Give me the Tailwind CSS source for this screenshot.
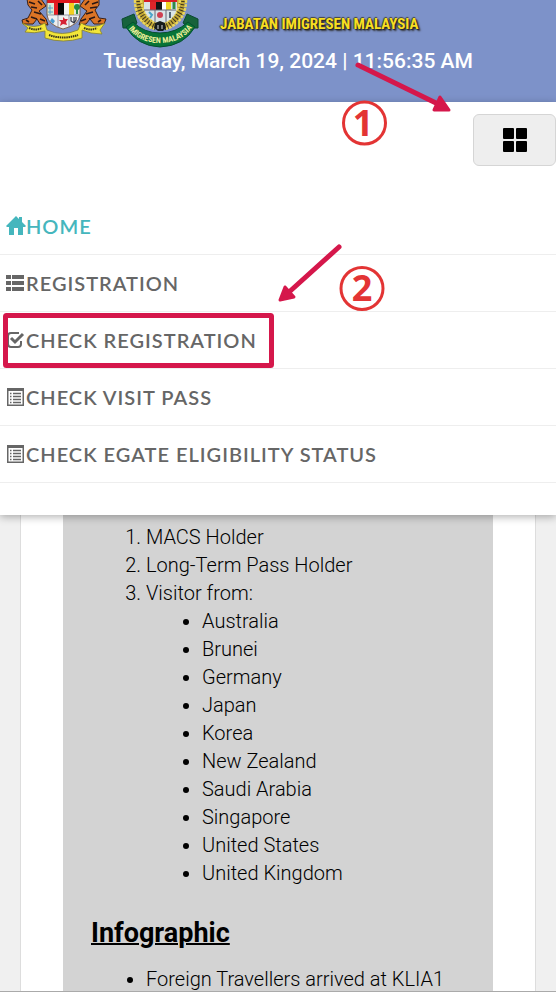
<!DOCTYPE html>
<html lang="en">
<head>
<meta charset="utf-8">
<meta name="viewport" content="width=device-width, initial-scale=1">
<title>Jabatan Imigresen Malaysia</title>
<script src="https://cdn.jsdelivr.net/npm/@tailwindcss/browser@4"></script>
</head>
<body class="bg-[#f0f0f0] font-['Roboto',sans-serif] text-black">
<div class="relative flex min-h-screen flex-col overflow-hidden border-b border-[#aaa]">

  <header class="flex flex-col bg-[#7d92c9] pb-7">
    <div class="flex h-12 items-start pl-5">
      <svg class="h-11 w-22 shrink-0" viewBox="0 0 88 44" role="img" aria-label="Coat of arms of Malaysia">
        <g fill="#dc7425" stroke="#3b2118" stroke-width="1">
          <path d="M7-1H21L26 6 19 11 26 19 28 25 20 24 17 19 13 24H3L2 20 8 18 12 10 8 5Z"/>
          <path d="M79-1H65L60 6 67 11 61 19 59 25 66 24 70 19 74 24H84L86 19 79 18 75 10 79 5Z"/>
        </g>
        <g fill="none" stroke="#2a1714" stroke-width="1.6">
          <path d="M9 2l6 2M18 1l4 4M11 7l6 1M14 12l7 2M11 17l6 2M20 19l5 2M6 20l3 2"/>
          <path d="M78 2l-6 2M69 1l-4 4M77 7l-7 1M73 12l-7 2M75 17l-6 2M66 19l-5 2M81 20l-3 2"/>
        </g>
        <path d="M27 0H60V15Q59 25 43 29 28 25 27 15Z" fill="#eee"/>
        <path d="M27 0H60V3H27Z" fill="#df171c"/>
        <path d="M27 3H34V15H27Z" fill="#d9e8d4"/><path d="M28 8h5M28 12h5M30 5v9" stroke="#54a2c6"/>
        <path d="M34 3H40V15H34Z" fill="#e31e23"/><path d="M38 3H44V15H38Z" fill="#090909"/>
        <path d="M44 3H49V15H44Z" fill="#f4f4f4"/><path d="M49 3H54V15H49Z" fill="#f3d020"/>
        <path d="M54 3H60V15H54Z" fill="#e5ead8"/><circle cx="57" cy="7" r="3" fill="#258b45"/><path d="M57 8v6" stroke="#258b45" stroke-width="2"/>
        <path d="M27 15H60M38 15V27M49 15V27" stroke="#778" stroke-width=".7"/>
        <path d="M32 18l3 3-2 3-3-3Z" fill="#499bd2"/><path d="M43 17l2 2 3 0-2 3 1 3-4-1-3 2 1-4-2-2 4 0Z" fill="#d52335"/>
        <path d="M51 17v4l3 2 2-3v-3M54 17v5" fill="none" stroke="#323647" stroke-width="1.2"/>
        <path d="M27 0V15Q28 25 43 29 59 25 60 15V0" fill="none" stroke="#68462b" stroke-width=".8"/>
        <path d="M2 23Q14 30 25 23L27 30Q42 37 58 30L61 23Q72 30 85 23L80 30 82 34Q70 34 62 30V38Q43 44 25 38V31Q14 34 5 32L8 28Z" fill="#f3e638" stroke="#88812b" stroke-width=".8"/>
        <path d="M9 28q7 3 13 0M29 35q14 5 29 0M64 28q7 3 13 0" fill="none" stroke="#37351d" stroke-width="2" stroke-dasharray="1.5 .7"/>
      </svg>
      <svg class="ml-3 h-12 w-20 shrink-0" viewBox="0 0 80 48" role="img" aria-label="Imigresen Malaysia crest">
        <path d="M16 0Q14 23 33 29H47Q65 22 65 0Z" fill="#c2a735"/>
        <path d="M18 1Q19 20 36 27M63 1Q61 20 44 27" fill="none" stroke="#3d351e" stroke-width="7" stroke-dasharray="1 2"/>
        <path d="M15 0Q15 22 34 29M66 0Q66 22 46 29M21 0Q23 16 37 24M60 0Q58 16 43 24" fill="none" stroke="#ead55a" stroke-width="2.5" stroke-dasharray="3 1"/>
        <path d="M24 0H57V9Q54 21 40 24 27 20 24 9Z" fill="#d9e4e7"/>
        <path d="M30 0H37V10H30Z" fill="#df252a"/><path d="M36 0H42V10H36Z" fill="#151515"/><path d="M42 0H46V10H42Z" fill="#fff"/><path d="M46 0H51V10H46Z" fill="#efd528"/>
        <path d="M24 0H57V2H24Z" fill="#d91e25"/><path d="M54 2v7" stroke="#2e8b4a" stroke-width="3"/>
        <path d="M24 10H56M35 10V22M46 10V22" stroke="#667"/>
        <path d="M29 12l3 3-2 3" fill="none" stroke="#4ba4ca" stroke-width="2"/><circle cx="40" cy="15" r="3" fill="#ce4051"/><path d="M50 12v6" stroke="#567" stroke-width="2"/>
        <path d="M35 23l5-2 5 2 1 5-3 3h-5l-4-3Z" fill="#171c1c"/><path d="M38 25v4M42 25v4" stroke="#ddd"/>
        <path d="M2 19L14 14 17 23 10 28 3 28Z" fill="#17633c" stroke="#0c4a32"/><path d="M78 19L67 14 63 23 70 28 78 28Z" fill="#17633c" stroke="#0c4a32"/>
        <path d="M6 27L13 22Q24 33 40 33 56 33 68 22L75 27Q64 46 40 47 17 46 6 27Z" fill="#087337" stroke="#064f30"/>
        <path id="motto" d="M8 28Q19 43 40 43 61 43 73 27" fill="none"/>
        <text class="font-['Liberation_Sans_Narrow','Roboto_Condensed',sans-serif] text-[8px] font-bold" fill="#eff09a"><textPath href="#motto" startOffset="50%" text-anchor="middle">IMIGRESEN MALAYSIA</textPath></text>
      </svg>
      <h1 class="ml-5 pt-3 font-['Liberation_Sans_Narrow','Roboto_Condensed','Liberation_Sans',sans-serif] text-[15px] leading-6 font-bold whitespace-nowrap text-[#f8df21] [text-shadow:1px_1px_1px_#222,-1px_0_1px_#444,0_-1px_1px_#444,2px_2px_2px_#333]">JABATAN IMIGRESEN MALAYSIA</h1>
    </div>
    <p class="pl-5 text-center text-[21px] leading-[26px] font-medium whitespace-nowrap text-white">Tuesday, March 19, 2024 | 11:56:35 AM</p>
  </header>

  <div class="relative bg-white pt-3 pb-8 shadow-[0_2px_8px_rgba(0,0,0,0.3)]">
    <div class="flex justify-end">
      <button type="button" aria-label="Menu" class="flex h-[52px] w-[83px] items-center justify-center rounded-md border border-[#d5d5d5] bg-[#eee]">
        <svg class="size-6" viewBox="0 0 24 24" aria-hidden="true"><rect x="0" y="0" width="11" height="11" rx="1"/><rect x="13" y="0" width="11" height="11" rx="1"/><rect x="0" y="13" width="11" height="11" rx="1"/><rect x="13" y="13" width="11" height="11" rx="1"/></svg>
      </button>
    </div>
    <nav class="mt-8 font-['Lato',sans-serif] text-[20px] font-semibold tracking-wider text-[#666]">
      <a href="#" class="flex h-[57px] items-center border-b border-[#eee] pl-1.5 text-[#45b6bd]">
        <svg class="size-5 shrink-0" viewBox="0 0 20 20" fill="currentColor" aria-hidden="true"><path d="M10 0L13 3V1H16V6L20 10 19 11H17V19H12V12H8V19H3V11H1L0 10Z"/></svg>HOME</a>
      <a href="#" class="flex h-[57px] items-center border-b border-[#eee] pl-1.5">
        <svg class="size-5 shrink-0" viewBox="0 0 20 20" fill="currentColor" aria-hidden="true"><path d="M0 2H5V6H0ZM6 2H18V6H6ZM0 8H5V12H0ZM6 8H18V12H6ZM0 14H5V18H0ZM6 14H18V18H6Z"/></svg>REGISTRATION</a>
      <a href="#" class="flex h-[57px] items-center border-b border-[#eee] pl-1.5">
        <svg class="size-5 shrink-0" viewBox="0 0 20 20" fill="none" stroke="currentColor" aria-hidden="true"><path d="M13 3H5Q2 3 2 6V14Q2 17 5 17H12Q15 17 15 14V11" stroke-width="2"/><path d="M5 8L9 12 17 4" stroke-width="3"/></svg>CHECK REGISTRATION</a>
      <a href="#" class="flex h-[57px] items-center border-b border-[#eee] pl-1.5">
        <svg class="size-5 shrink-0" viewBox="0 0 20 20" aria-hidden="true"><path d="M1 1H18V19H1Z" fill="currentColor"/><path d="M2.500 4H16.500V17.500H2.500Z" fill="#fff"/><path d="M4 6.500H5.500M7 6.500H15M4 9.500H5.500M7 9.500H15M4 12.500H5.500M7 12.500H15M4 15.500H5.500M7 15.500H15" stroke="currentColor" stroke-width="1.300"/></svg>CHECK VISIT PASS</a>
      <a href="#" class="flex h-[57px] items-center border-b border-[#eee] pl-1.5">
        <svg class="size-5 shrink-0" viewBox="0 0 20 20" aria-hidden="true"><path d="M1 1H18V19H1Z" fill="currentColor"/><path d="M2.500 4H16.500V17.500H2.500Z" fill="#fff"/><path d="M4 6.500H5.500M7 6.500H15M4 9.500H5.500M7 9.500H15M4 12.500H5.500M7 12.500H15M4 15.500H5.500M7 15.500H15" stroke="currentColor" stroke-width="1.300"/></svg>CHECK EGATE ELIGIBILITY STATUS</a>
    </nav>
  </div>

  <main class="mx-5 flex flex-1 flex-col border-x border-[#ddd] bg-white px-[42px]">
    <div class="flex-1 bg-[#d3d3d3] pt-2 pl-7 text-[20px] leading-7 font-light">
      <ol class="list-decimal pl-[55px]">
        <li>MACS Holder</li>
        <li>Long-Term Pass Holder</li>
        <li>Visitor from:
          <ul class="list-disc pl-14">
            <li>Australia</li>
            <li>Brunei</li>
            <li>Germany</li>
            <li>Japan</li>
            <li>Korea</li>
            <li>New Zealand</li>
            <li>Saudi Arabia</li>
            <li>Singapore</li>
            <li>United States</li>
            <li>United Kingdom</li>
          </ul>
        </li>
      </ol>
      <h2 class="mt-[30px] text-[27px] leading-8 font-bold underline decoration-2">Infographic</h2>
      <ul class="mt-[18px] list-disc pl-[55px] leading-6">
        <li>Foreign Travellers arrived at KLIA1</li>
      </ul>
    </div>
  </main>

  <svg class="pointer-events-none absolute top-0 left-0 h-[400px] w-[556px]" viewBox="0 0 556 400" fill="none" aria-hidden="true">
    <g stroke="#d5174b" stroke-width="5" stroke-linecap="round" stroke-linejoin="round">
      <path d="M358 65L438 104"/><path d="M339 247L288 293"/>
      <path d="M440 97L434 110 449 110Z" fill="#d5174b" stroke-width="3"/>
      <path d="M285 287L294 297 280 300Z" fill="#d5174b" stroke-width="3"/>
      <rect x="5.500" y="315.500" width="266" height="50" rx="1"/>
    </g>
    <g stroke="#e33434" stroke-width="3"><circle cx="364.500" cy="123" r="21"/><circle cx="362" cy="288.500" r="21"/></g>
    <g class="font-['Open_Sans',sans-serif] text-[36px] font-bold" fill="#e33434" text-anchor="middle"><text x="363" y="136">1</text><text x="362" y="301">2</text></g>
  </svg>
</div>
</body>
</html>
